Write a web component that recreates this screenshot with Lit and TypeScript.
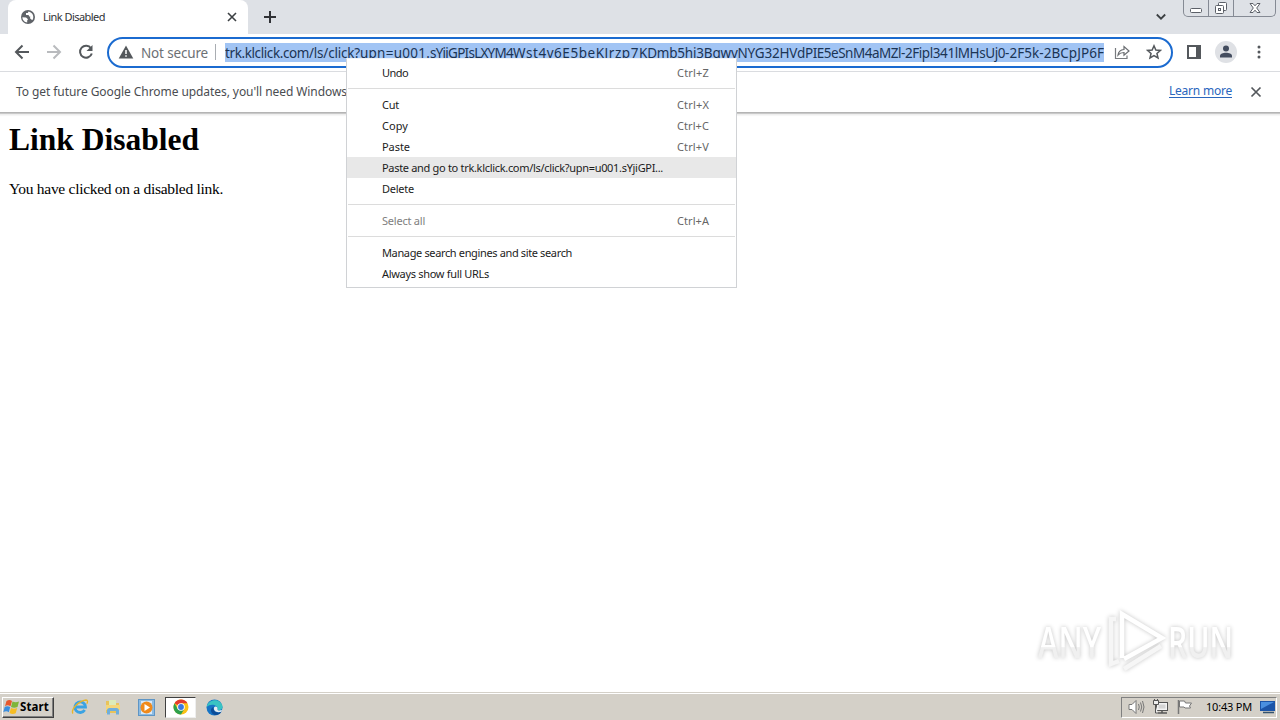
import { LitElement, html, css, svg } from "lit";
import { customElement, property, query } from "lit/decorators.js";

/** A single line of text whose letter spacing is computed to span a given width. */
@customElement("fit-text")
class FitText extends LitElement {
  @property() text = "";
  @property({ type: Number }) width = 0;
  @query("span") line!: HTMLSpanElement;
  static styles = css`
    :host { display: block; white-space: pre; flex: none; }
    span { display: inline-block; }
  `;
  render() {
    return html`<span>${this.text}</span>`;
  }
  firstUpdated() {
    const natural = this.line.getBoundingClientRect().width;
    this.line.style.letterSpacing = `${(this.width - natural) / this.text.length}px`;
    this.style.width = `${this.width}px`;
  }
}

const icon = (w: number, h: number, body: unknown) =>
  html`<svg width=${w} height=${h} viewBox="0 0 ${w} ${h}" fill="none">${body}</svg>`;

const URL_PARTS: [string, number][] = [
  ["trk.klclick.com", 84],
  ["/ls/click?", 51],
  ["upn=u001.", 70],
  ["sYjiGPIsLXYM4", 83],
  ["Wst4v6E5beKJrzp7", 126],
  ["KDmb5hi3BqwvNYG32HVd", 166],
  ["PIE5eSnM4aMZl", 96],
  ["-2Fipl341lMHsUj0", 104],
  ["-2F5k-2BCpJP6F", 99],
];

type Item = { label: string; w: number; key?: string; kw?: number; cls?: string } | null;
const MENU: Item[] = [
  { label: "Undo", w: 26, key: "Ctrl+Z", kw: 32 },
  null,
  { label: "Cut", w: 17, key: "Ctrl+X", kw: 32 },
  { label: "Copy", w: 26, key: "Ctrl+C", kw: 32 },
  { label: "Paste", w: 28, key: "Ctrl+V", kw: 32 },
  { label: "Paste and go to trk.klclick.com/ls/click?upn=u001.sYjiGPI...", w: 281, cls: "hot" },
  { label: "Delete", w: 32 },
  null,
  { label: "Select all", w: 43, key: "Ctrl+A", kw: 32, cls: "off" },
  null,
  { label: "Manage search engines and site search", w: 190 },
  { label: "Always show full URLs", w: 107 },
];

@customElement("app-root")
class AppRoot extends LitElement {
  static styles = css`
    :host { display: flex; flex-direction: column; position: relative; width: 1280px; height: 720px; overflow: hidden; background: #fff; font: 11px/14px "Noto Sans", sans-serif; color: #303236; }
    * { box-sizing: border-box; }
    svg { display: block; flex: none; }
    .strip { height: 34px; background: #dee1e6; display: flex; padding-left: 8px; flex: none; }
    .tab { width: 240px; height: 34px; background: #fff; border-radius: 8px 8px 0 0; display: flex; align-items: center; padding: 0 10px 0 13px; }
    .tab fit-text { margin-left: 8px; }
    .tab .close { margin-left: auto; }
    .plus { margin: 10px 0 0 15px; }
    .chev { margin: 13px 0 0 auto; }
    .winbtns { display: flex; width: 93px; height: 17px; margin: 0 4px 0 16px; border: 1px solid #858a94; border-top: 0; border-radius: 0 0 5px 5px; }
    .winbtns > div { display: flex; justify-content: center; align-items: center; border-right: 1px solid #858a94; width: 25px; }
    .winbtns > div:last-child { border: 0; flex: 1; }
    .bar { height: 38px; display: flex; align-items: center; border-bottom: 1px solid #dadce0; flex: none; padding: 0 0 1px 14px; }
    .back { margin-right: 16px; }
    .fwd { margin-right: 16px; }
    .omni { width: 1066px; height: 31px; border: 2px solid #1b6bd0; border-radius: 16px; margin-left: 13px; display: flex; align-items: center; padding: 0 8px 0 9px; font-size: 13.5px; line-height: 18px; }
    .omni .ns { color: #6c7075; margin-left: 7px; padding-top: 1px; }
    .sep { width: 1px; height: 16px; background: #a9adb2; margin: 0 9px 0 7px; flex: none; }
    .url { display: flex; width: 879px; flex: none; height: 19px; overflow: hidden; background: #a1c4f4; color: #1b3454; margin-top: 1px; line-height: 20px; }
    .share { margin-left: 10px; }
    .star { margin-left: 16px; }
    .panel { margin-left: 14px; }
    .who { margin-left: 14px; }
    .dots { margin-left: 20px; }
    .info { height: 41px; flex: none; display: flex; align-items: center; padding: 0 18px 0 16px; font-size: 12px; line-height: 18px; color: #4a4d51; border-bottom: 1px solid #b4b4b4; box-shadow: 0 1px 0 #c9c9c9, 0 2px 0 #eee, 0 3px 1px #f6f6f6; }
    .info .more { margin-left: auto; color: #2a66bd; border-bottom: 1px solid #2a66bd; line-height: 13px; height: 14px; margin-right: 18px; margin-bottom: 2px; }
    .page { flex: 1; padding: 8px 9px; font-family: "Liberation Serif", serif; color: #000; }
    .h { font-size: 31.5px; line-height: 37px; font-weight: bold; }
    .p { font-size: 15.5px; line-height: 18px; margin-top: 22px; }
    .menu { position: absolute; left: 346px; top: 58px; width: 391px; height: 230px; background: #fff; border: 1px solid #d0d2d5; border-top-color: #f0f4fa; padding-top: 3px; color: #1c1c1c; }
    .item { display: flex; justify-content: space-between; align-items: center; height: 21px; padding: 0 27px 0 35px; }
    .key { color: #666; }
    .hot { background: #e8e8e8; }
    .off { color: #808080; }
    .rule { height: 1px; background: #dcdcdc; margin: 5px 1px; }
    .task { height: 28px; flex: none; background: #d4d0c8; border-top: 1px solid #d4d0c8; box-shadow: inset 0 1px 0 #fff; display: flex; align-items: center; padding: 1px 3px 0 2px; color: #000; }
    .start { width: 52px; height: 21px; border: 1px solid; border-color: #fff #404040 #404040 #fff; box-shadow: inset -1px -1px 0 #808080; display: flex; align-items: center; padding-left: 0; font-weight: bold; font-size: 11.5px; }
    .start fit-text { margin-left: 0; }
    .ie { margin-left: 17px; } .folder { margin-left: 16px; } .play { margin-left: 17px; }
    .chrome { width: 31px; height: 21px; margin: 0 10px 0 10px; background: #fff; border: 1px solid; border-color: #404040 #eee #eee #404040; display: flex; align-items: center; justify-content: center; }
    .tray { margin-left: auto; width: 156px; height: 21px; border: 1px solid; border-color: #808080 #fff #fff #808080; display: flex; align-items: center; padding-left: 6px; }
    .tray svg + svg { margin-left: 7px; }
    .tray fit-text { margin: 0 8px 0 13px; }
    .mark { position: absolute; left: 1030px; top: 604px; overflow: visible; filter: drop-shadow(0 0 2px #c4c4c4); }
    .mark text { font-family: "Open Sans", sans-serif; font-weight: 600; font-size: 44px; }
  `;

  render() {
    return html`
      <div class="strip">
        <div class="tab">
          ${icon(14, 14, svg`<circle cx="7" cy="7" r="7" fill="#5f6368"/><path d="M1.400 7.300l3.700.2 1.900 1.800-.8 1.200v2C3.500 12.200 1.400 10 1.400 7.300z" fill="#fff"/><path d="M7.500 1.500L6.800 3H5v2h2.600l.5 1.600h1.200L9 8.200l1.600 1.500h1.200c1.500-3.500-.3-7.400-4.300-8.200z" fill="#fff"/>`)}
          <fit-text text="Link Disabled" width="62"></fit-text>
          <span class="close">${icon(12, 12, svg`<path d="M2 2l8 8M10 2l-8 8" stroke="#3c4043" stroke-width="1.6"/>`)}</span>
        </div>
        <span class="plus">${icon(14, 14, svg`<path d="M7 1v12M1 7h12" stroke="#303236" stroke-width="2"/>`)}</span>
        <span class="chev">${icon(12, 8, svg`<path d="M1.800 1.500L6 5.700l4.200-4.200" stroke="#3c4043" stroke-width="1.800"/>`)}</span>
        <div class="winbtns">
          <div>${icon(14, 17, svg`<rect x="1.500" y="8.500" width="11" height="4" rx="1" fill="#fff" stroke="#5c6068"/>`)}</div>
          <div>${icon(14, 17, svg`<rect x="4.500" y="2.500" width="8" height="8" rx="1" fill="#fff" stroke="#5c6068"/><rect x="1.500" y="5.500" width="8" height="8" rx="1" fill="#fff" stroke="#5c6068"/><rect x="4.500" y="8.500" width="2" height="2" stroke="#5c6068"/>`)}</div>
          <div>${icon(14, 17, svg`<path d="M2 3.500h3l2 2.300 2-2.300h3L8.700 8 12 12.500H9L7 10.200 5 12.500H2L5.300 8z" fill="#fff" stroke="#5c6068"/>`)}</div>
        </div>
      </div>
      <div class="bar">
        <span class="back">${icon(16, 16, svg`<path d="M8.500 1.500L2 8l6.500 6.500M2 8h13" stroke="#54585c" stroke-width="2"/>`)}</span>
        <span class="fwd">${icon(16, 16, svg`<path d="M7.500 1.500L14 8l-6.500 6.500M14 8H1" stroke="#b9bbbe" stroke-width="2"/>`)}</span>
        ${icon(16, 16, svg`<path d="M13 4.300A6 6 0 1 0 13.800 9.500" stroke="#54585c" stroke-width="2"/><path d="M14.500 1v6h-6z" fill="#54585c"/>`)}
        <div class="omni">
          ${icon(16, 16, svg`<path d="M8 1.500L15.300 14.500H.7z" fill="#54585c"/><path d="M8 6v4M8 11.200v1.600" stroke="#fff" stroke-width="1.500"/>`)}
          <fit-text class="ns" text="Not secure" width="67"></fit-text>
          <div class="sep"></div>
          <div class="url">${URL_PARTS.map(([t, w]) => html`<fit-text text=${t} width=${w}></fit-text>`)}</div>
          <span class="share">${icon(16, 16, svg`<path d="M1.500 4v10.500h11.500V11.500" stroke="#777a7e" stroke-width="1.200"/><path d="M4 11c.5-3.700 2.500-5.300 6-5.500V2.500L15 7l-5 4.300V8.500C7.200 8.500 5.500 9.300 4 11z" stroke="#6a6d71" stroke-width="1.200"/>`)}</span>
          <span class="star">${icon(16, 16, svg`<path d="M8 1.800l1.850 4.200 4.550.4-3.450 3 1.050 4.500L8 11.500l-4 2.400L5.050 9.400 1.600 6.400l4.550-.4z" stroke="#54585c" stroke-width="1.500"/>`)}</span>
        </div>
        <span class="panel">${icon(14, 14, svg`<rect x="1" y="1" width="12" height="12" stroke="#54585c" stroke-width="2"/><path d="M9 1h4v12H9z" fill="#54585c"/>`)}</span>
        <span class="who">${icon(22, 22, svg`<circle cx="11" cy="11" r="11" fill="#dfe1e5"/><circle cx="11" cy="7.500" r="3" fill="#434c5e"/><path d="M5 16.500v-1.500c0-2 3-3.200 6-3.200s6 1.200 6 3.200v1.500z" fill="#434c5e"/>`)}</span>
        <span class="dots">${icon(4, 14, svg`<circle cx="2" cy="2" r="1.500" fill="#54585c"/><circle cx="2" cy="7" r="1.500" fill="#54585c"/><circle cx="2" cy="12" r="1.500" fill="#54585c"/>`)}</span>
      </div>
      <div class="info">
        <fit-text text="To get future Google Chrome updates, you'll need Windows" width="331"></fit-text>
        <fit-text class="more" text="Learn more" width="63"></fit-text>
        ${icon(12, 12, svg`<path d="M1.500 1.500l9 9M10.500 1.500l-9 9" stroke="#54585c" stroke-width="1.700"/>`)}
      </div>
      <div class="page">
        <fit-text class="h" text="Link Disabled" width="190"></fit-text>
        <fit-text class="p" text="You have clicked on a disabled link." width="214"></fit-text>
      </div>
      <div class="task">
        <div class="start">
          ${icon(17, 16, svg`<path d="M3.500 2q3-2 5.500 0L7.500 7.200q-3-1.700-5.500 0z" fill="#e8582c"/><path d="M9.500 2.500q3 1.500 6.500 0L14.500 8q-3.500 1.500-6.500 0z" fill="#7fb539"/><path d="M1.700 8.100q2.500-1.700 5.500 0L5.800 13.200q-2.500-1.700-5.500 0z" fill="#3b8ede"/><path d="M8 9q3 1.500 6.200 0L12.700 14.200q-3.200 1.500-6.200-.2z" fill="#f6bd24"/>`)}
          <fit-text text="Start" width="29"></fit-text>
        </div>
        <span class="ie">${icon(18, 18, svg`<path d="M13.700 12a5.300 5.300 0 1 1 .8-3H5" stroke="#3ba3e3" stroke-width="2.800"/><path d="M2 15.500C-.5 12 7 3 15 2c2 .1 1.800 2 .8 3.800" stroke="#e7b52b" stroke-width="1.300"/>`)}</span>
        <span class="folder">${icon(16, 16, svg`<path d="M1 2h5l1 2h7v10H1z" fill="#e9c35b"/><path d="M4 1h7v6H4z" fill="#dcebb8"/><path d="M1 6h14v5H1z" fill="#f4d67a"/><path d="M2 15.500v-4c0-1.500 1-2.500 2.500-2.500h7c1.500 0 2.500 1 2.500 2.500v4h-3V12H5v3.500z" fill="#6faedb"/>`)}</span>
        <span class="play">${icon(17, 17, svg`<rect x=".5" y=".5" width="16" height="16" fill="#8cbbe2" stroke="#5e95c5"/><rect x="3" y="2" width="11" height="13" fill="#d8eafa"/><circle cx="8.500" cy="8.500" r="6" fill="#f08a1c"/><path d="M6.500 5v7l5.500-3.500z" fill="#fff"/>`)}</span>
        <div class="chrome">${icon(16, 16, svg`<circle cx="8" cy="8" r="7.500" fill="#fbc116"/><path d="M8 8L1.500 4.250A7.500 7.500 0 0 1 14.500 4.250H8z" fill="#e33b2e"/><path d="M1.500 4.250A7.500 7.500 0 0 0 8 15.500L11.250 9.900 8 8 4.750 9.900z" fill="#2da04c"/><circle cx="8" cy="8" r="3.800" fill="#fff"/><circle cx="8" cy="8" r="2.900" fill="#3a78e0"/>`)}</div>
        ${icon(17, 17, svg`<circle cx="8.500" cy="8.500" r="8" fill="#1674c5"/><path d="M.6 8C2 0 14-1.500 16.500 7c.5 3-2 4.600-5 4.100 1.500-4.600-6-7.600-10.900-3.100z" fill="#39c3c3"/><path d="M7.600 8c-1 4.500 3 6.500 7.700 5C13 17 6 17.500 5 12c-.2-2 1-3.500 2.600-4z" fill="#0c4c98"/><path d="M8 8.500c1.500-2 4-.5 3.500 1.700-.4 1.200 2 1.600 4.500.8l-.7 1.700c-4.500 1.500-8-.7-7.300-4.200z" fill="#e8eef2"/>`)}
        <div class="tray">
          ${icon(17, 16, svg`<path d="M1 5.500h3l4-4v13l-4-4H1z" fill="#fff" stroke="#777"/><path d="M10.500 5q1.500 3 0 6M12.500 3.500q2.500 4.500 0 9M14.500 2q3 6 0 12" stroke="#777"/>`)}
          ${icon(17, 16, svg`<rect x="4.500" y="3.500" width="11" height="8" fill="#f3f3f3" stroke="#555"/><rect x="6.500" y="5.500" width="7" height="4" fill="#d4d4d4"/><path d="M6 14h9M10 12v2" stroke="#555" stroke-width="1.500"/><path d="M1.500 1.500h5v4h-5zM2.500 1V0M5.500 1V0M3.500 6v8H6" fill="#eee" stroke="#555"/>`)}
          ${icon(17, 16, svg`<path d="M2.500 1v14" stroke="#777" stroke-width="1.500"/><path d="M3.500 2h5l1 2h6l-2 3 1 2H9L8 8H3.500z" fill="#fff" stroke="#777"/>`)}
          <fit-text text="10:43 PM" width="46"></fit-text>
          ${icon(16, 14, svg`<path d="M0 1h15v10H0z" fill="#1c55a8"/><path d="M1 2h13L1 9z" fill="#4a90e0"/><path d="M3 12.500h11" stroke="#34536f" stroke-width="1.500"/>`)}
        </div>
      </div>
      <div class="menu">
        ${MENU.map((m) => m
          ? html`<div class="item ${m.cls ?? ""}"><fit-text text=${m.label} width=${m.w}></fit-text>${m.key ? html`<fit-text class="key" text=${m.key} width=${m.kw ?? 32}></fit-text>` : ""}</div>`
          : html`<div class="rule"></div>`)}
      </div>
      <svg class="mark" width="215" height="76" viewBox="0 0 215 76" fill="none">
        <defs><linearGradient id="g" x1="0" y1="0" x2="0" y2="1"><stop offset=".6" stop-color="#fff"/><stop offset=".61" stop-color="#f0f0f0"/></linearGradient></defs>
        <text x="8" y="54" fill="url(#g)" textLength="63" lengthAdjust="spacingAndGlyphs">ANY</text>
        <text x="138" y="54" fill="url(#g)" textLength="65" lengthAdjust="spacingAndGlyphs">RUN</text>
        <path d="M92 54V10l40 24-38 21" stroke="#fff" stroke-width="4.500"/>
        <path d="M86 15h-5v45l8-3M94 65l37-23" stroke="#f6f6f6" stroke-width="4.500"/>
      </svg>
    `;
  }
}
